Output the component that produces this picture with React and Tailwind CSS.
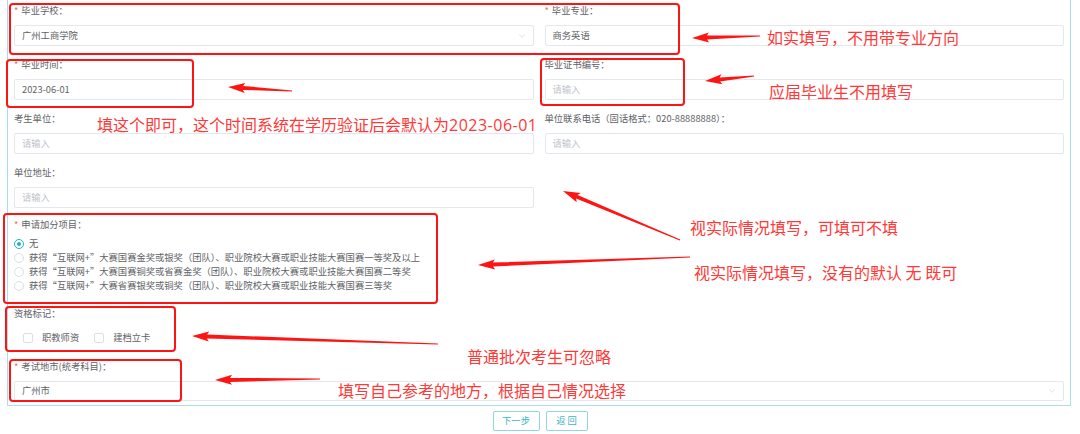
import React from "react";
import { ChevronDown } from "lucide-react";

function arrowPoints(tail, tip, H = 15, W = 5, w1 = 2, w0 = 0.6) {
  const dx = tip[0] - tail[0];
  const dy = tip[1] - tail[1];
  const len = Math.hypot(dx, dy);
  const ux = dx / len;
  const uy = dy / len;
  const nx = -uy;
  const ny = ux;
  const bx = tip[0] - ux * H;
  const by = tip[1] - uy * H;
  const pts = [
    [tail[0] + nx * w0, tail[1] + ny * w0],
    [bx + nx * w1, by + ny * w1],
    [bx - ux * 2 + nx * W, by - uy * 2 + ny * W],
    [tip[0], tip[1]],
    [bx - ux * 2 - nx * W, by - uy * 2 - ny * W],
    [bx - nx * w1, by - ny * w1],
    [tail[0] - nx * w0, tail[1] - ny * w0],
  ];
  return pts.map((p) => p[0].toFixed(1) + "," + p[1].toFixed(1)).join(" ");
}

const arrows = [
  { tail: [760, 36], tip: [692, 38] },
  { tail: [292, 91], tip: [228, 87] },
  { tail: [754, 76], tip: [705, 81] },
  { tail: [680, 240], tip: [563, 191] },
  { tail: [690, 257], tip: [478, 265] },
  { tail: [438, 344], tip: [192, 336] },
  { tail: [320, 379], tip: [215, 380] },
];

const boxes = [
  { x: 10, y: 4, w: 669, h: 50 },
  { x: 7, y: 60, w: 186, h: 47 },
  { x: 541, y: 59, w: 143, h: 46 },
  { x: 4, y: 214, w: 433, h: 89 },
  { x: 6, y: 307, w: 169, h: 44 },
  { x: 10, y: 360, w: 171, h: 41 },
];

function Label({ req, children }) {
  return (
    <div className="h-[16px] leading-[16px] text-[9.3px] text-[#606266] whitespace-nowrap">
      {req && <span className="text-[#f56c6c] mr-[3px]">*</span>}
      {children}
    </div>
  );
}

function Input({ value, placeholder, select, tall }) {
  return (
    <div
      className={
        "mt-[7px] border border-[#e4e7ed] rounded-[2px] pl-[7px] pr-[6px] flex items-center justify-between text-[9.3px] bg-white " +
        (tall ? "h-[21px]" : "h-[20px]")
      }
    >
      <span className={value ? "text-[#606266]" : "text-[#c0c4cc]"}>{value || placeholder}</span>
      {select && <ChevronDown size={10} strokeWidth={1.2} className="text-[#c0c4cc]" />}
    </div>
  );
}

function Field({ label, req, value, placeholder, select }) {
  return (
    <div>
      <Label req={req}>{label}</Label>
      <Input value={value} placeholder={placeholder} select={select} tall />
    </div>
  );
}

function Radio({ checked, children }) {
  return (
    <div className="h-[14px] flex items-center text-[9.3px] text-[#606266] whitespace-nowrap">
      {checked ? (
        <span className="w-[10px] h-[10px] rounded-full border border-[#1eb2c1] flex items-center justify-center">
          <span className="w-[4px] h-[4px] rounded-full bg-[#1eb2c1]" />
        </span>
      ) : (
        <span className="w-[10px] h-[10px] rounded-full border border-[#dcdfe6]" />
      )}
      <span className="ml-[5px]">{children}</span>
    </div>
  );
}

function Checkbox({ children }) {
  return (
    <div className="flex items-center text-[9.3px] text-[#606266]">
      <span className="w-[10px] h-[10px] rounded-[2px] border border-[#dcdfe6]" />
      <span className="ml-[9px]">{children}</span>
    </div>
  );
}

const Note = ({ className, children }) => (
  <div
    className={
      "absolute text-[16px] leading-[20px] text-[#ff3838] whitespace-nowrap font-['Noto_Sans_CJK_SC',sans-serif] " +
      className
    }
  >
    {children}
  </div>
);

export default function App() {
  return (
    <div className="relative w-[1080px] h-[434px] bg-white overflow-hidden font-['Noto_Sans_CJK_SC',sans-serif]">
      <div className="ml-[7px] mr-[9px] border-x border-b border-[#a9def0] px-[6px] pt-[2px] pb-[4px]">
        <div className="grid grid-cols-2 gap-x-[11px] gap-y-[10px]">
          <Field label="毕业学校：" req value="广州工商学院" select />
          <Field label="毕业专业：" req value="商务英语" />
          <Field label="毕业时间：" req value="2023-06-01" />
          <Field label="毕业证书编号：" placeholder="请输入" />
          <Field label="考生单位：" placeholder="请输入" />
          <Field label="单位联系电话（固话格式：020-88888888）：" placeholder="请输入" />
          <Field label="单位地址：" placeholder="请输入" />
          <div />
        </div>

        <div className="mt-[8px]">
          <Label req>申请加分项目：</Label>
          <div className="mt-[5px] flex flex-col">
            <Radio checked>无</Radio>
            <Radio>获得“互联网+”大赛国赛金奖或银奖（团队）、职业院校大赛或职业技能大赛国赛一等奖及以上</Radio>
            <Radio>获得“互联网+”大赛国赛铜奖或省赛金奖（团队）、职业院校大赛或职业技能大赛国赛二等奖</Radio>
            <Radio>获得“互联网+”大赛省赛银奖或铜奖（团队）、职业院校大赛或职业技能大赛国赛三等奖</Radio>
          </div>
        </div>

        <div className="mt-[12px]">
          <Label>资格标记：</Label>
          <div className="mt-[10px] h-[14px] pl-[9px] flex items-center gap-[15px]">
            <Checkbox>职教师资</Checkbox>
            <Checkbox>建档立卡</Checkbox>
          </div>
        </div>

        <div className="mt-[13px]">
          <Label req>考试地市(统考科目)：</Label>
          <Input value="广州市" select />
        </div>
      </div>

      <div className="mt-[5px] flex justify-center gap-[6px]">
        <button className="w-[47px] h-[20px] border border-[#8fd8de] rounded-[2px] text-[9.3px] text-[#3cb5c2] bg-white">
          下一步
        </button>
        <button className="w-[42px] h-[20px] border border-[#8fd8de] rounded-[2px] text-[9.3px] text-[#3cb5c2] bg-white">
          返 回
        </button>
      </div>

      <svg className="absolute inset-0 pointer-events-none" width="1080" height="434" viewBox="0 0 1080 434">
        {boxes.map((b, i) => (
          <rect key={i} x={b.x} y={b.y} width={b.w} height={b.h} rx="3" fill="none" stroke="#ff1414" strokeWidth="2" />
        ))}
        {arrows.map((a, i) => (
          <polygon key={i} points={arrowPoints(a.tail, a.tip)} fill="#ff1414" />
        ))}
      </svg>

      <Note className="left-[767px] top-[27px]">如实填写，不用带专业方向</Note>
      <Note className="left-[769px] top-[81px]">应届毕业生不用填写</Note>
      <Note className="left-[97px] top-[114px]">
        填这个即可，这个时间系统在学历验证后会默认为
        <span className="font-['Open_Sans',sans-serif] tracking-[0.5px]">2023-06-01</span>
      </Note>
      <Note className="left-[690px] top-[217px]">视实际情况填写，可填可不填</Note>
      <Note className="left-[694px] top-[262px]">视实际情况填写，没有的默认 无 既可</Note>
      <Note className="left-[467px] top-[346px]">普通批次考生可忽略</Note>
      <Note className="left-[338px] top-[380px]">填写自己参考的地方，根据自己情况选择</Note>
    </div>
  );
}
